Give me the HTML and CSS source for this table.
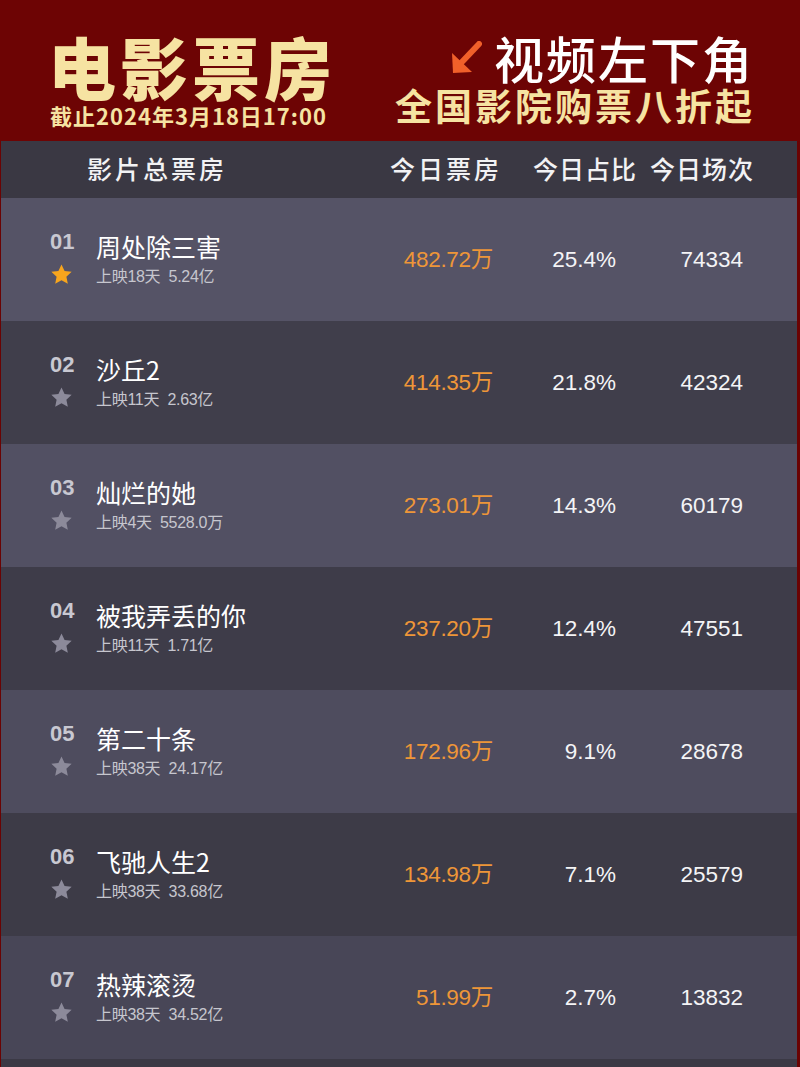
FILE: index.html
```html
<!DOCTYPE html>
<html lang="zh-CN">
<head>
<meta charset="utf-8">
<title>电影票房</title>
<link rel="stylesheet" href="styles.css">
</head>
<body>
<div class="page">
  <header class="top">
    <div class="brand">
      <h1 class="title">电影票房</h1>
      <div class="stamp">截止2024年3月18日17:00</div>
    </div>
    <div class="promo">
      <div class="promo-line">
        <svg class="arrow" viewBox="0 0 32 34" width="32" height="34"><path d="M29 3 L10 23" stroke="#f0602a" stroke-width="6" stroke-linecap="round" fill="none"/><path d="M2 12 L3 32 L22 31 Z" fill="#f0602a"/></svg>
        <span class="promo-big">视频左下角</span>
      </div>
      <div class="promo-small">全国影院购票八折起</div>
    </div>
  </header>

  <div class="board">
    <div class="cols">
      <span class="col-name">影片总票房</span>
      <span class="col-box">今日票房</span>
      <span class="col-pct">今日占比</span>
      <span class="col-cnt">今日场次</span>
    </div>

    <div class="row">
      <div class="rank"><span class="num">01</span><svg class="star gold" viewBox="0 0 24 24"><path d="M12 1.5l3.2 6.9 7.4.8-5.5 5.1 1.5 7.4L12 18l-6.6 3.7 1.5-7.4L1.4 9.2l7.4-.8z"/></svg></div>
      <div class="film"><div class="name">周处除三害</div><div class="meta">上映18天&nbsp; 5.24亿</div></div>
      <div class="box">482.72万</div>
      <div class="pct">25.4%</div>
      <div class="cnt">74334</div>
    </div>

    <div class="row">
      <div class="rank"><span class="num">02</span><svg class="star" viewBox="0 0 24 24"><path d="M12 1.5l3.2 6.9 7.4.8-5.5 5.1 1.5 7.4L12 18l-6.6 3.7 1.5-7.4L1.4 9.2l7.4-.8z"/></svg></div>
      <div class="film"><div class="name">沙丘2</div><div class="meta">上映11天&nbsp; 2.63亿</div></div>
      <div class="box">414.35万</div>
      <div class="pct">21.8%</div>
      <div class="cnt">42324</div>
    </div>

    <div class="row">
      <div class="rank"><span class="num">03</span><svg class="star" viewBox="0 0 24 24"><path d="M12 1.5l3.2 6.9 7.4.8-5.5 5.1 1.5 7.4L12 18l-6.6 3.7 1.5-7.4L1.4 9.2l7.4-.8z"/></svg></div>
      <div class="film"><div class="name">灿烂的她</div><div class="meta">上映4天&nbsp; 5528.0万</div></div>
      <div class="box">273.01万</div>
      <div class="pct">14.3%</div>
      <div class="cnt">60179</div>
    </div>

    <div class="row">
      <div class="rank"><span class="num">04</span><svg class="star" viewBox="0 0 24 24"><path d="M12 1.5l3.2 6.9 7.4.8-5.5 5.1 1.5 7.4L12 18l-6.6 3.7 1.5-7.4L1.4 9.2l7.4-.8z"/></svg></div>
      <div class="film"><div class="name">被我弄丢的你</div><div class="meta">上映11天&nbsp; 1.71亿</div></div>
      <div class="box">237.20万</div>
      <div class="pct">12.4%</div>
      <div class="cnt">47551</div>
    </div>

    <div class="row">
      <div class="rank"><span class="num">05</span><svg class="star" viewBox="0 0 24 24"><path d="M12 1.5l3.2 6.9 7.4.8-5.5 5.1 1.5 7.4L12 18l-6.6 3.7 1.5-7.4L1.4 9.2l7.4-.8z"/></svg></div>
      <div class="film"><div class="name">第二十条</div><div class="meta">上映38天&nbsp; 24.17亿</div></div>
      <div class="box">172.96万</div>
      <div class="pct">9.1%</div>
      <div class="cnt">28678</div>
    </div>

    <div class="row">
      <div class="rank"><span class="num">06</span><svg class="star" viewBox="0 0 24 24"><path d="M12 1.5l3.2 6.9 7.4.8-5.5 5.1 1.5 7.4L12 18l-6.6 3.7 1.5-7.4L1.4 9.2l7.4-.8z"/></svg></div>
      <div class="film"><div class="name">飞驰人生2</div><div class="meta">上映38天&nbsp; 33.68亿</div></div>
      <div class="box">134.98万</div>
      <div class="pct">7.1%</div>
      <div class="cnt">25579</div>
    </div>

    <div class="row">
      <div class="rank"><span class="num">07</span><svg class="star" viewBox="0 0 24 24"><path d="M12 1.5l3.2 6.9 7.4.8-5.5 5.1 1.5 7.4L12 18l-6.6 3.7 1.5-7.4L1.4 9.2l7.4-.8z"/></svg></div>
      <div class="film"><div class="name">热辣滚烫</div><div class="meta">上映38天&nbsp; 34.52亿</div></div>
      <div class="box">51.99万</div>
      <div class="pct">2.7%</div>
      <div class="cnt">13832</div>
    </div>

    <div class="row"></div>
  </div>
</div>
</body>
</html>
```

FILE: styles.css
```css
* { box-sizing: border-box; margin: 0; padding: 0; }
html, body { width: 800px; height: 1067px; overflow: hidden; }
body {
  background: #6a0303;
  font-family: "Noto Sans CJK SC", "Noto Sans", sans-serif;
}
.page { width: 800px; height: 1067px; display: flex; flex-direction: column; }

.top {
  height: 141px;
  flex: none;
  background: #6d0404;
  display: flex;
  justify-content: space-between;
  padding: 0 48px 0 48px;
}
.brand { padding-top: 30px; }
.title {
  font-size: 68px;
  line-height: 72px;
  font-weight: 900;
  color: #f6e3a2;
  letter-spacing: 4px;
}
.stamp {
  font-size: 22px;
  line-height: 26px;
  font-weight: 700;
  color: #f6e3a2;
  margin-left: 2px;
  letter-spacing: 1px;
}
.promo { padding-top: 31px; display: flex; flex-direction: column; align-items: flex-end; }
.promo-line { display: flex; align-items: center; height: 52px; }
.arrow { width: 32px; height: 34px; margin-right: 12px; margin-top: 2px; }
.promo-big {
  font-size: 50px;
  line-height: 52px;
  color: #ffffff;
  font-weight: 500;
  letter-spacing: 2px;
  margin-right: -2px;
}
.promo-small {
  font-size: 37px;
  line-height: 44px;
  color: #f6e3a2;
  font-weight: 700;
  letter-spacing: 3px;
  margin-right: -3px;
}

.board {
  flex: 1;
  margin: 0 3px 0 1px;
  display: flex;
  flex-direction: column;
  overflow: hidden;
}
.cols {
  height: 57px;
  flex: none;
  background: #3a3843;
  display: flex;
  align-items: center;
  color: #f2f2f4;
  font-size: 25px;
  letter-spacing: 3px;
  font-weight: 500;
  padding-bottom: 4px;
}
.col-name { margin-left: 86px; width: 303px; }
.col-box { width: 143px; }
.col-pct { width: 117px; letter-spacing: 1px; }
.col-cnt { letter-spacing: 1px; }

.row {
  height: 123px;
  flex: none;
  display: grid;
  grid-template-columns: 46px 277px 120px 123px 127px;
  padding-left: 49px;
  align-items: center;
}
.row:nth-child(2) { background: #555366; }
.row:nth-child(3) { background: #403e4b; }
.row:nth-child(4) { background: #525063; }
.row:nth-child(5) { background: #3e3c49; }
.row:nth-child(6) { background: #4e4c5e; }
.row:nth-child(7) { background: #3d3b47; }
.row:nth-child(8) { background: #484657; }
.row:nth-child(9) { background: #3b3945; }

.rank { display: flex; flex-direction: column; align-items: flex-start; margin-top: -4px; }
.num {
  font-family: "Liberation Sans", Arial, sans-serif;
  font-weight: 700;
  font-size: 22px;
  line-height: 26px;
  color: #c8c8d1;
}
.star { width: 23px; height: 23px; margin-top: 8px; fill: #8c8a9a; }
.star.gold { fill: #f7a51d; }

.film { margin-top: -2px; }
.name {
  font-size: 25px;
  line-height: 30px;
  color: #ffffff;
}
.meta {
  font-family: "Liberation Sans", "Noto Sans CJK SC", sans-serif;
  font-size: 16px;
  line-height: 20px;
  color: #c6c6ce;
  margin-top: 6px;
  letter-spacing: -0.3px;
}

.box, .pct, .cnt {
  font-family: "Liberation Sans", "Noto Sans CJK SC", sans-serif;
  font-size: 22.5px;
  text-align: right;
}
.box { color: #ee9638; letter-spacing: -0.3px; margin-top: -6px; }
.pct, .cnt { color: #f4f4f6; margin-top: 0; }
```
